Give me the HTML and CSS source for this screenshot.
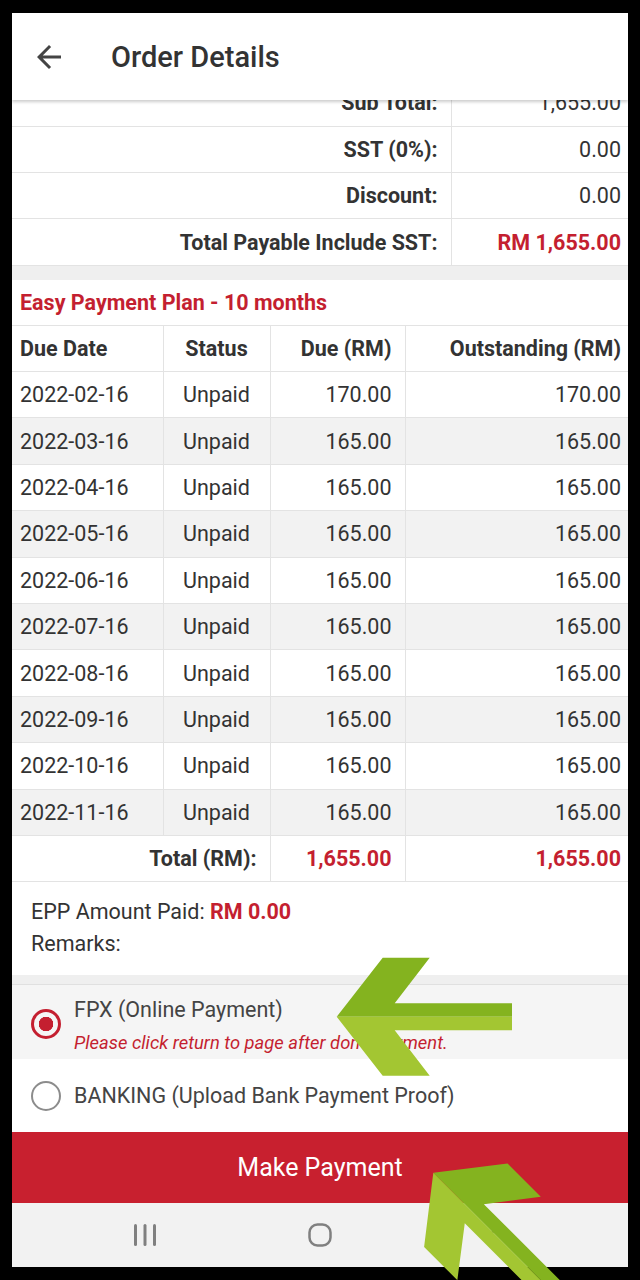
FILE: index.html
```html
<!DOCTYPE html>
<html lang="en">
<head>
  <meta charset="UTF-8">
  <meta name="viewport" content="width=device-width, initial-scale=1.0">
  <title>Order Details</title>
  <link rel="stylesheet" href="styles.css">
</head>
<body>
  <div class="phone">
    <header class="appbar">
      <svg class="back" viewBox="0 0 24 24"><path d="M20 11H7.83l5.59-5.59L12 4l-8 8 8 8 1.41-1.41L7.83 13H20v-2z"/></svg>
      <h1>Order Details</h1>
    </header>

    <main class="content">
      <table class="summary">
        <tr><th>Sub Total:</th><td>1,655.00</td></tr>
        <tr><th>SST (0%):</th><td>0.00</td></tr>
        <tr><th>Discount:</th><td>0.00</td></tr>
        <tr><th>Total Payable Include SST:</th><td class="red bold">RM 1,655.00</td></tr>
      </table>

      <div class="spacer"></div>

      <h2 class="epp-title">Easy Payment Plan - 10 months</h2>
      <table class="schedule">
        <colgroup>
          <col style="width:151px"><col style="width:107px"><col style="width:135px"><col>
        </colgroup>
        <thead>
          <tr><th class="left">Due Date</th><th class="center">Status</th><th>Due (RM)</th><th>Outstanding (RM)</th></tr>
        </thead>
        <tbody>
          <tr><td class="left">2022-02-16</td><td class="center">Unpaid</td><td>170.00</td><td>170.00</td></tr>
          <tr><td class="left">2022-03-16</td><td class="center">Unpaid</td><td>165.00</td><td>165.00</td></tr>
          <tr><td class="left">2022-04-16</td><td class="center">Unpaid</td><td>165.00</td><td>165.00</td></tr>
          <tr><td class="left">2022-05-16</td><td class="center">Unpaid</td><td>165.00</td><td>165.00</td></tr>
          <tr><td class="left">2022-06-16</td><td class="center">Unpaid</td><td>165.00</td><td>165.00</td></tr>
          <tr><td class="left">2022-07-16</td><td class="center">Unpaid</td><td>165.00</td><td>165.00</td></tr>
          <tr><td class="left">2022-08-16</td><td class="center">Unpaid</td><td>165.00</td><td>165.00</td></tr>
          <tr><td class="left">2022-09-16</td><td class="center">Unpaid</td><td>165.00</td><td>165.00</td></tr>
          <tr><td class="left">2022-10-16</td><td class="center">Unpaid</td><td>165.00</td><td>165.00</td></tr>
          <tr><td class="left">2022-11-16</td><td class="center">Unpaid</td><td>165.00</td><td>165.00</td></tr>
        </tbody>
        <tfoot>
          <tr><th colspan="2">Total (RM):</th><td class="red bold">1,655.00</td><td class="red bold">1,655.00</td></tr>
        </tfoot>
      </table>

      <div class="epp-info">
        <p>EPP Amount Paid: <strong class="red">RM 0.00</strong></p>
        <p>Remarks:</p>
      </div>

      <div class="spacer small"></div>

      <div class="methods">
        <label class="method checked">
          <span class="radio"></span>
          <span class="method-text">
            <span class="method-name">FPX (Online Payment)</span>
            <em class="note">Please click return to page after done payment.</em>
          </span>
        </label>
        <label class="method">
          <span class="radio"></span>
          <span class="method-name">BANKING (Upload Bank Payment Proof)</span>
        </label>
      </div>

      <button class="pay">Make Payment</button>
    </main>

    <nav class="sysnav">
      <svg viewBox="0 0 24 24"><rect x="1" y="1" width="3" height="22" rx="1.5"/><rect x="10.5" y="1" width="3" height="22" rx="1.5"/><rect x="20" y="1" width="3" height="22" rx="1.5"/></svg>
      <svg viewBox="0 0 24 24"><rect class="outline" x="1.5" y="1.5" width="21" height="21" rx="8"/></svg>
      <svg viewBox="0 0 24 24"><path class="outline" d="M16 2 7 12l9 10"/></svg>
    </nav>
  </div>

  <!-- annotation arrows drawn over the screenshot -->
  <svg class="marks" viewBox="0 0 640 1280">
    <defs>
      <g id="arrow">
        <polygon class="dark" points="0,0 46,-59 93,-59 58,-13.5 260,-13.5 260,0"/>
        <polygon class="light" points="0,0 260,0 260,13.5 58,13.5 93,59 46,59"/>
      </g>
    </defs>
    <svg x="0" y="0" width="512" height="1280" viewBox="0 0 512 1280">
      <use href="#arrow" transform="translate(336.7 1016.7)"/>
    </svg>
    <use href="#arrow" transform="translate(433.3 1172.7) rotate(45)"/>
  </svg>
</body>
</html>
```

FILE: styles.css
```css
*, *::before, *::after {
  padding: 0;
  margin: 0;
  box-sizing: border-box;
}

html, body {
  height: 1280px;
}

body {
  position: relative;
  padding: 13px 12px;
  overflow: hidden;
  background: #000;
  color: #333;
  font-family: Roboto, "Liberation Sans", sans-serif;
}

.phone {
  height: 1254px;
  display: flex;
  flex-direction: column;
  overflow: hidden;
  background: #fff;
}

/* top bar */
.appbar {
  position: relative;
  z-index: 1;
  flex: none;
  height: 87px;
  display: flex;
  align-items: center;
  gap: 44px;
  padding-left: 19px;
  background: #fff;
  box-shadow: 0 2px 3px rgba(0, 0, 0, .2);
}

.back {
  width: 36px;
  height: 36px;
  fill: #444;
}

.appbar h1 {
  font-size: 29px;
  font-weight: 500;
  color: #333;
}

.content {
  flex: 1;
  display: flex;
  flex-direction: column;
  overflow: hidden;
}

.red { color: #c41f30; }
.bold { font-weight: 700; }

table {
  width: 100%;
  border-collapse: collapse;
  table-layout: fixed;
  font-size: 21.5px;
}

th { font-weight: 700; }

/* order totals */
.summary {
  margin-top: -20px;
}

.summary tr {
  height: 46.3px;
  border-bottom: 1px solid #e3e3e3;
}

.summary th {
  width: 439px;
  padding: 0 13px 0 8px;
  text-align: right;
  border-right: 1px solid #e3e3e3;
}

.summary td {
  padding-right: 7px;
  text-align: right;
}

.spacer {
  flex: none;
  height: 14px;
  background: #efefef;
}

.spacer.small {
  height: 10px;
  border-bottom: 1px solid #e0e0e0;
}

/* instalment schedule */
.epp-title {
  flex: none;
  height: 45px;
  padding-left: 8px;
  line-height: 45px;
  font-size: 21.5px;
  font-weight: 700;
  color: #c41f30;
}

.schedule tr {
  height: 46.4px;
  border-top: 1px solid #e3e3e3;
}

.schedule tbody tr:nth-child(even) {
  background: #f2f2f2;
}

.schedule th,
.schedule td {
  padding: 0 13px 0 8px;
  text-align: right;
  border-left: 1px solid #e3e3e3;
  white-space: nowrap;
}

.schedule th:first-child,
.schedule td:first-child {
  border-left: 0;
}

.schedule th:last-child,
.schedule td:last-child {
  padding-right: 7px;
}

.schedule .left { text-align: left; }
.schedule .center { text-align: center; padding: 0; }

.schedule tfoot tr {
  border-bottom: 1px solid #e3e3e3;
}

.epp-info {
  flex: none;
  height: 93px;
  padding: 14px 19px 0;
  font-size: 21.5px;
  line-height: 32px;
}

/* payment methods */
.methods {
  flex: none;
}

.method {
  height: 73.5px;
  display: flex;
  align-items: center;
  gap: 13px;
  padding-left: 19px;
  font-size: 21.5px;
  color: #444;
}

.method.checked {
  background: #f5f5f5;
}

.radio {
  flex: none;
  width: 30px;
  height: 30px;
  border: 2.5px solid #8c8c8c;
  border-radius: 50%;
}

.checked .radio {
  margin-top: 4px;
  border: 3px solid #c41f30;
  background: radial-gradient(circle, #c41f30 0 7px, transparent 7.5px);
}

.method-text {
  display: flex;
  flex-direction: column;
  padding-top: 6px;
  line-height: 26px;
}

.note {
  margin-top: 9px;
  font-size: 18.4px;
  line-height: 22px;
  color: #c41f30;
}

.pay {
  flex: none;
  height: 71px;
  border: 0;
  background: #c8202f;
  color: #fff;
  font-family: inherit;
  font-size: 25px;
}

/* android nav bar */
.sysnav {
  flex: none;
  height: 64px;
  display: flex;
  align-items: center;
  justify-content: center;
  gap: 151px;
  background: #f2f2f2;
}

.sysnav svg {
  width: 24px;
  height: 24px;
  fill: #808080;
}

.sysnav .outline {
  fill: none;
  stroke: #808080;
  stroke-width: 2.5;
}

/* green arrows laid over the page */
.marks {
  position: absolute;
  inset: 0;
  width: 640px;
  height: 1280px;
  pointer-events: none;
}

.marks .dark { fill: #84b31f; }
.marks .light { fill: #a3c632; }
```
